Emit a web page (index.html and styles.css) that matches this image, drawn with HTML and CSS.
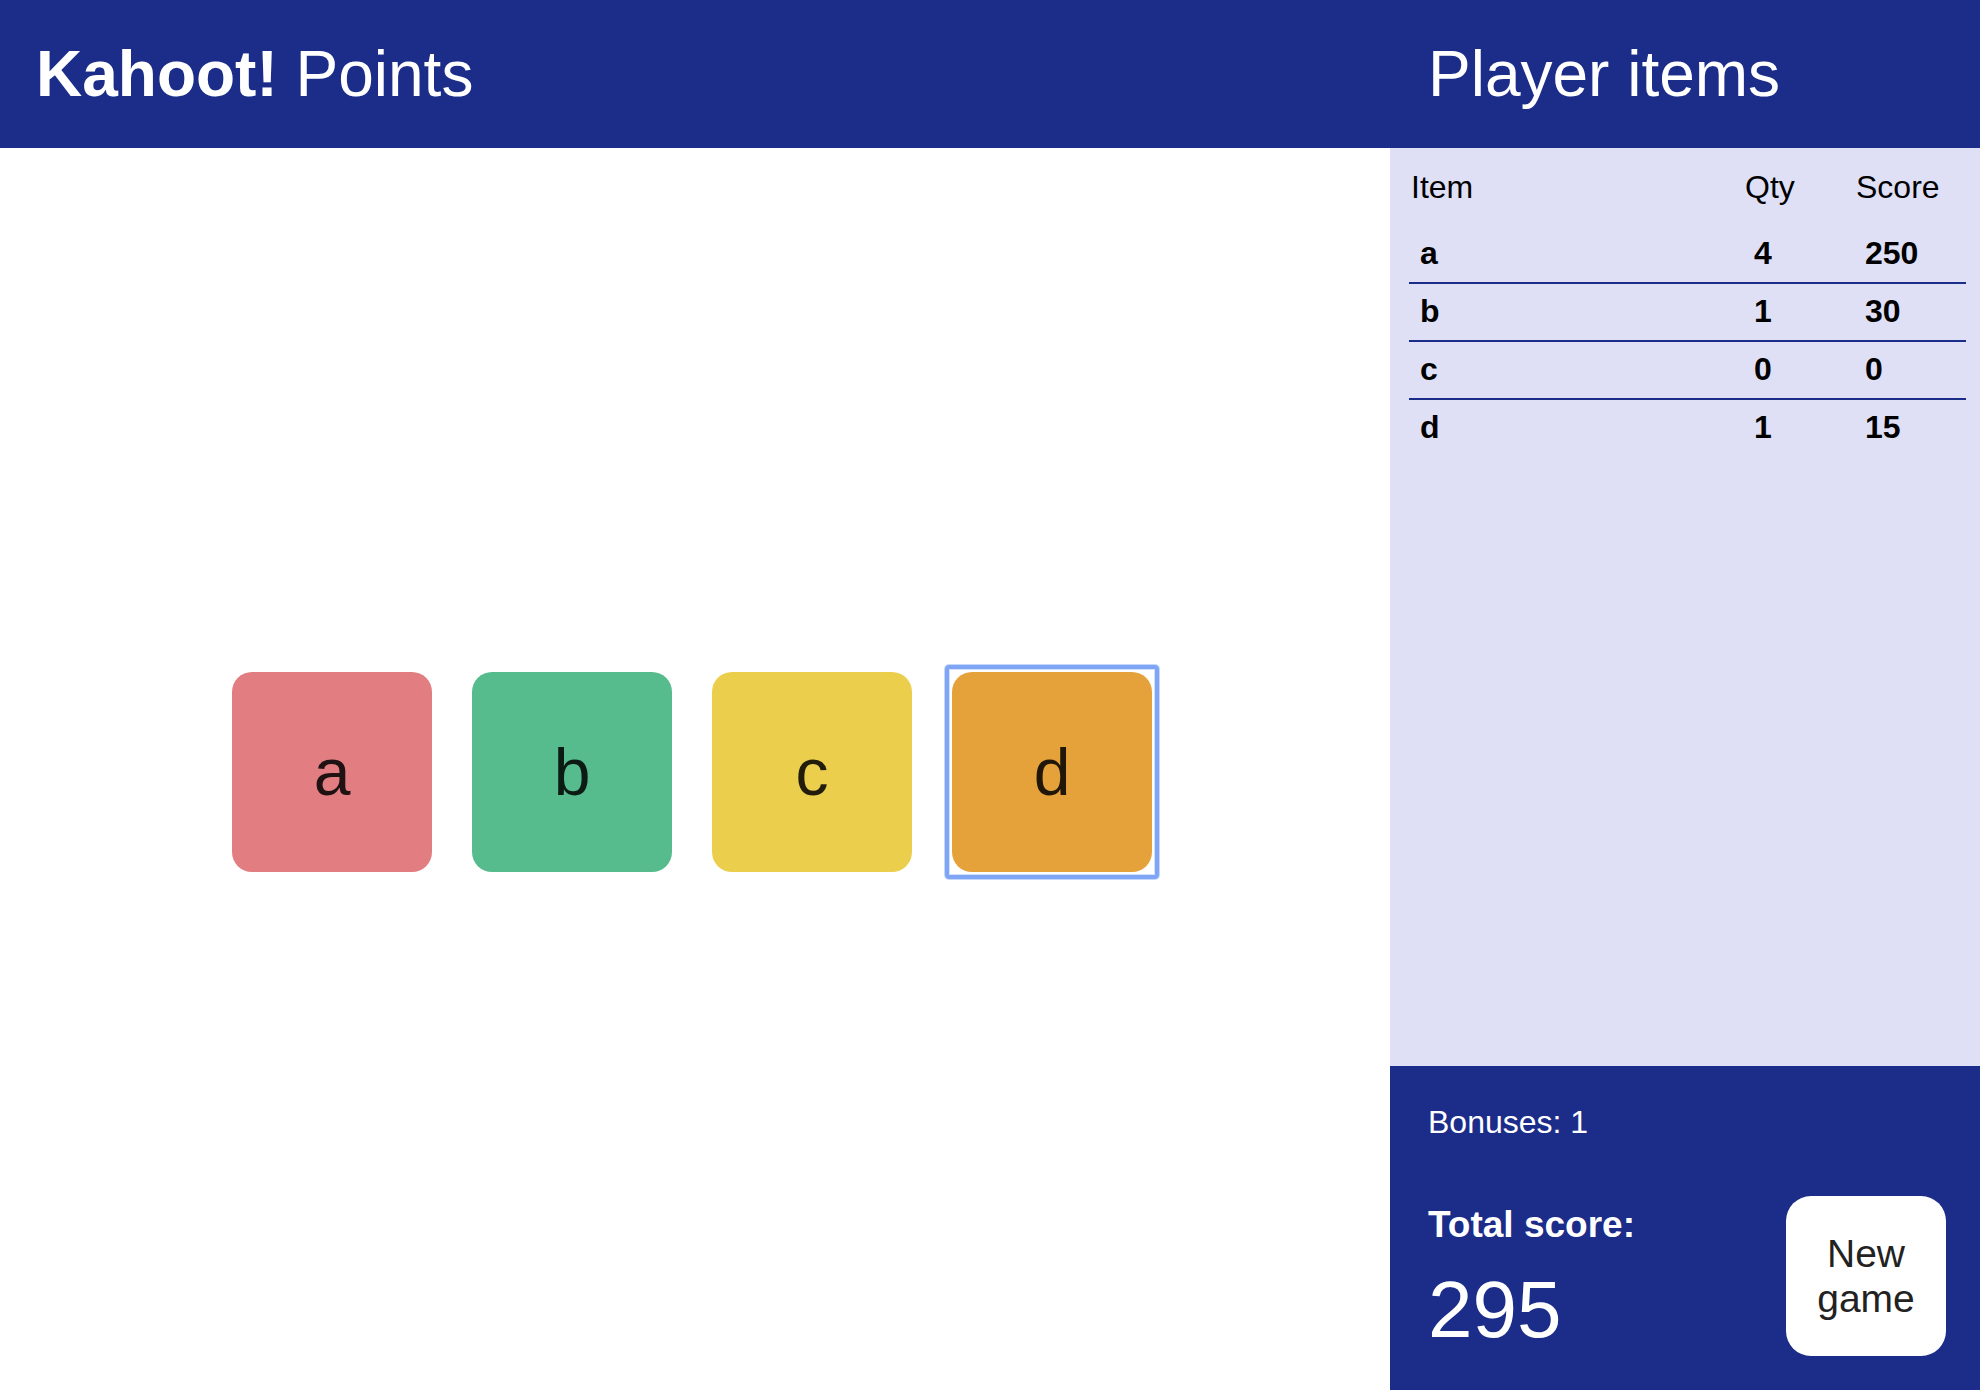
FILE: index.html
```html
<!DOCTYPE html>
<html lang="en">
<head>
<meta charset="utf-8">
<title>Kahoot! Points</title>
<link rel="stylesheet" href="styles.css">
</head>
<body>
<div class="app">
  <header class="bar">
    <h1 class="brand"><b>Kahoot!</b> Points</h1>
    <h2 class="side-title">Player items</h2>
  </header>
  <div class="content">
    <main class="board">
      <button class="tile tile-a" type="button">a</button>
      <button class="tile tile-b" type="button">b</button>
      <button class="tile tile-c" type="button">c</button>
      <button class="tile tile-d is-focused" type="button">d</button>
    </main>
    <aside class="sidebar">
      <div class="items">
        <table class="items-table">
          <colgroup>
            <col class="col-item">
            <col class="col-qty">
            <col class="col-score">
          </colgroup>
          <thead>
            <tr><th>Item</th><th>Qty</th><th>Score</th></tr>
          </thead>
          <tbody>
            <tr><td>a</td><td>4</td><td>250</td></tr>
            <tr><td>b</td><td>1</td><td>30</td></tr>
            <tr><td>c</td><td>0</td><td>0</td></tr>
            <tr><td>d</td><td>1</td><td>15</td></tr>
          </tbody>
        </table>
      </div>
      <div class="summary">
        <p class="bonuses">Bonuses: 1</p>
        <div class="total-row">
          <div class="total">
            <p class="total-label">Total score:</p>
            <p class="total-value">295</p>
          </div>
          <button class="new-game" type="button">New<br>game</button>
        </div>
      </div>
    </aside>
  </div>
</div>
</body>
</html>
```

FILE: styles.css
```css
* {
  box-sizing: border-box;
}

html, body {
  margin: 0;
  padding: 0;
  height: 100%;
}

body {
  font-family: "Liberation Sans", Arial, Helvetica, sans-serif;
  color: #111;
  background: #fff;
}

.app {
  display: flex;
  flex-direction: column;
  height: 1390px;
  width: 1980px;
}

.bar {
  display: grid;
  grid-template-columns: 1fr 590px;
  align-items: center;
  height: 148px;
  background: #1b2c89;
  color: #fff;
  flex: none;
}

.brand,
.side-title {
  margin: 0;
  font-size: 64px;
  font-weight: normal;
  line-height: normal;
}

.brand {
  padding-left: 36px;
}

.brand b {
  font-weight: bold;
}

.side-title {
  padding-left: 38px;
}

.content {
  flex: 1;
  display: grid;
  grid-template-columns: 1fr 590px;
  min-height: 0;
}

.board {
  display: flex;
  align-items: center;
  justify-content: center;
  gap: 40px;
  padding: 6px 6px 0 0;
}

.tile {
  position: relative;
  width: 200px;
  height: 200px;
  border: 0;
  border-radius: 20px;
  padding: 0;
  margin: 0;
  font-family: inherit;
  font-size: 66px;
  line-height: normal;
  color: rgba(0, 0, 0, 0.86);
  display: flex;
  align-items: center;
  justify-content: center;
  cursor: pointer;
  outline: none;
}

.tile-a { background: #e27e82; }
.tile-b { background: #56bc8e; }
.tile-c { background: #ecce4d; }
.tile-d { background: #e6a23a; }

.is-focused::after {
  content: "";
  position: absolute;
  inset: -7px;
  border: 4px solid #7ea6f4;
  border-radius: 4px;
  box-shadow: 0 0 0 1px rgba(126, 166, 244, 0.45), inset 0 0 0 1px rgba(126, 166, 244, 0.35);
  pointer-events: none;
}

.sidebar {
  background: #dfe0f6;
  display: flex;
  flex-direction: column;
  min-height: 0;
}

.items {
  flex: 1;
  padding: 12px 0 0 19px;
}

.items-table {
  width: 557px;
  border-collapse: collapse;
  table-layout: fixed;
  font-size: 32px;
  color: #000;
}

.col-item { width: 334px; }
.col-qty { width: 111px; }
.col-score { width: 112px; }

.items-table th {
  text-align: left;
  font-weight: normal;
  padding: 9px 0 20px 2px;
  line-height: normal;
}

.items-table td {
  font-weight: bold;
  padding: 9px 0 10px 11px;
  line-height: normal;
}

.items-table tbody tr {
  border-bottom: 2px solid #1b2c89;
}

.items-table tbody tr:last-child {
  border-bottom: 0;
}

.summary {
  flex: none;
  background: #1b2c89;
  color: #fff;
  padding: 38px 34px 34px 38px;
}

.bonuses {
  margin: 0 0 55px 0;
  font-size: 32px;
  line-height: normal;
}

.total-row {
  display: flex;
  justify-content: space-between;
  align-items: flex-end;
}

.total-label {
  margin: 0 0 18px 0;
  font-size: 37px;
  font-weight: bold;
  line-height: normal;
}

.total-value {
  margin: 0;
  font-size: 80px;
  line-height: normal;
}

.new-game {
  width: 160px;
  height: 160px;
  border: 0;
  border-radius: 25px;
  background: #fff;
  color: #222;
  font-family: inherit;
  font-size: 39px;
  line-height: 45px;
  padding: 0;
  text-align: center;
  cursor: pointer;
}
```
